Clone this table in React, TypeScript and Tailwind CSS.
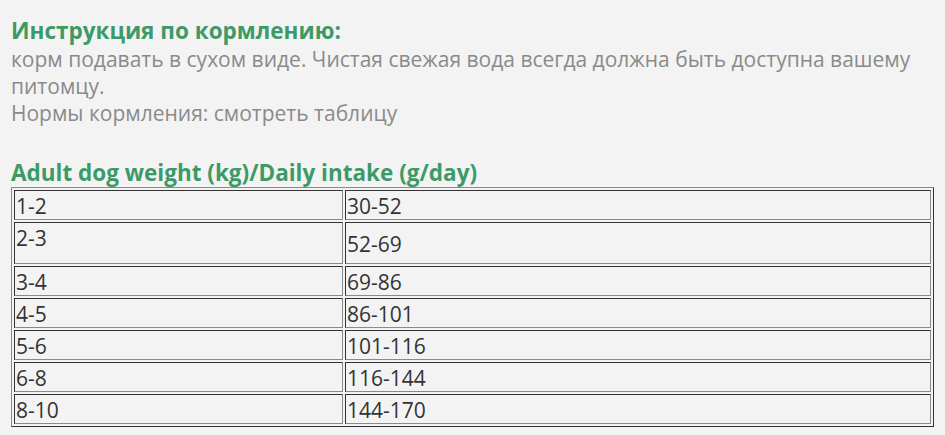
import React from "react";

const rows: [string, string][] = [
  ["1-2", "30-52"],
  ["2-3", "52-69"],
  ["3-4", "69-86"],
  ["4-5", "86-101"],
  ["5-6", "101-116"],
  ["6-8", "116-144"],
  ["8-10", "144-170"],
];

export default function App() {
  return (
    <div
      className="min-h-[435px] w-[945px] bg-[#f3f3f3] px-[11px] pt-[17px] text-[21px] leading-[27px]"
      style={{ fontFamily: '"Open Sans", "Noto Sans", sans-serif' }}
    >
      <div className="text-[22.5px] font-bold text-[#3d9a67]">Инструкция по кормлению:</div>
      <div className="mt-[2px] text-[#8a8a8a]">
        корм подавать в сухом виде. Чистая свежая вода всегда должна быть доступна вашему питомцу.
        <br />
        Нормы кормления: смотреть таблицу
      </div>
      <div className="mt-[32px] text-[22.5px] font-bold text-[#3d9a67]">
        Adult dog weight (kg)/Daily intake (g/day)
      </div>
      <table className="mt-px w-[923px] border-separate border-spacing-[2px] border border-t-[#8a8a8a] border-l-[#8a8a8a] border-b-[#333] border-r-[#333] leading-[26px] text-[#333]">
        <tbody>
          {rows.map(([a, b], i) => (
            <tr key={a} className={i === 1 ? "h-[42px]" : "h-[30px]"}>
              <td
                className={`w-[329px] border border-t-[#333] border-l-[#333] border-b-[#8a8a8a] border-r-[#8a8a8a] px-px pt-[2px] pb-0 ${
                  i === 1 ? "align-top" : "align-middle"
                }`}
              >
                {a}
              </td>
              <td className="border border-t-[#333] border-l-[#333] border-b-[#8a8a8a] border-r-[#8a8a8a] px-px pt-[2px] pb-0 align-middle">
                {b}
              </td>
            </tr>
          ))}
        </tbody>
      </table>
    </div>
  );
}
